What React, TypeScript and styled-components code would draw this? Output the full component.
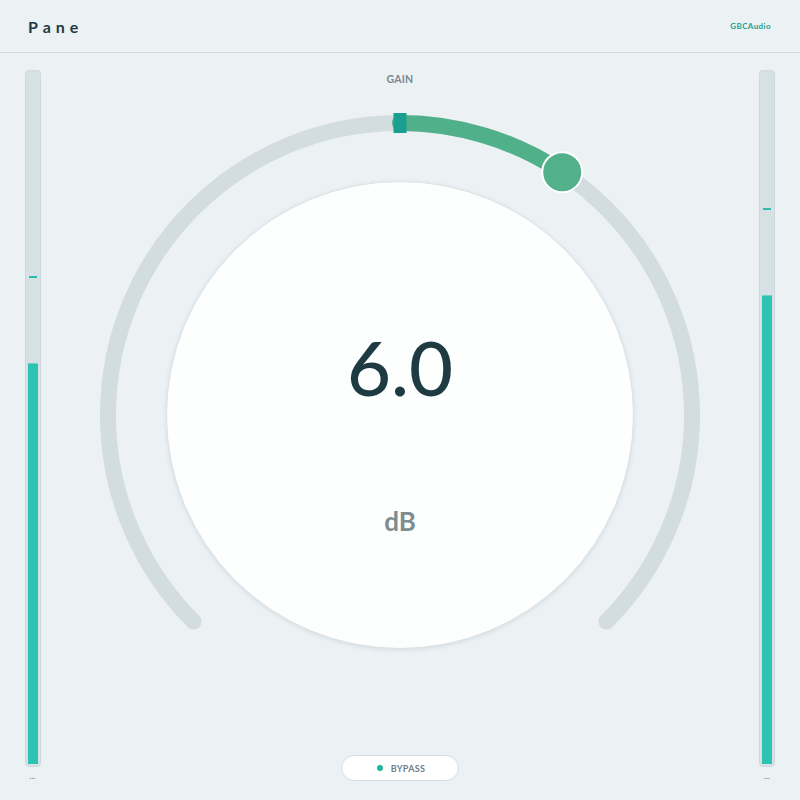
import styled, { createGlobalStyle } from 'styled-components';

const GlobalStyle = createGlobalStyle`
  html, body {
    margin: 0;
    padding: 0;
    background: #ecf1f4;
    font-family: Lato, "Open Sans", sans-serif;
  }
`;

const Page = styled.div`
  width: 800px;
  height: 800px;
  display: flex;
  flex-direction: column;
  background: #ecf1f4;
  overflow: hidden;
`;

const Header = styled.header`
  height: 52px;
  display: flex;
  align-items: center;
  justify-content: space-between;
  padding: 0 29px 0 28px;
  border-bottom: 1px solid #cfdbdd;
`;

const Title = styled.h1`
  margin: 0;
  font-size: 16px;
  font-weight: 700;
  letter-spacing: 5px;
  color: #1f3b42;
`;

const Brand = styled.span`
  font-size: 8px;
  font-weight: 700;
  letter-spacing: 0.4px;
  color: #1aa08f;
`;

const Body = styled.main`
  flex: 1;
  display: grid;
  grid-template-columns: 64px 1fr 64px;
  padding-top: 17px;
`;

const MeterColumn = styled.div<{ $right?: boolean }>`
  display: flex;
  flex-direction: column;
  align-items: center;
  padding: ${(p) => (p.$right ? '0 2px 0 0' : '0 0 0 1px')};
`;

const Track = styled.div`
  width: 10px;
  height: 691px;
  padding: 2px;
  border-radius: 4px;
  background: #d7e0e3;
  border: 1px solid #cdd9dc;
  display: flex;
  flex-direction: column;
  justify-content: flex-end;
  position: relative;
`;

const Fill = styled.div`
  background: #2cc3b3;
  border-top: 1px solid #6fd2c7;
`;

const Peak = styled.div`
  position: absolute;
  left: 3px;
  right: 3px;
  height: 2px;
  background: #2bbcad;
`;

const Dots = styled.span`
  margin-top: 4px;
  font-size: 8px;
  line-height: 10px;
  font-weight: 700;
  color: #7d8a8f;
  letter-spacing: 0.3px;
`;

const Center = styled.section`
  display: flex;
  flex-direction: column;
  align-items: center;
`;

const Label = styled.div`
  margin-top: 3px;
  font-size: 10.5px;
  line-height: 12px;
  font-weight: 700;
  color: #7a888d;
  letter-spacing: 0.2px;
`;

const Dial = styled.div`
  margin-top: 10px;
  width: 640px;
  height: 640px;
  display: grid;
  place-items: center;
  & > * {
    grid-area: 1 / 1;
  }
`;

const Face = styled.div`
  width: 466px;
  height: 466px;
  border-radius: 50%;
  background: #fdfefe;
  border: 1px solid #dbe3e6;
  box-shadow: 0 1px 4px rgba(40, 70, 80, 0.12);
  display: flex;
  flex-direction: column;
  align-items: center;
`;

const Value = styled.div`
  margin-top: 140px;
  font-size: 76px;
  line-height: 90px;
  font-weight: 500;
  color: #1f3b42;
`;

const Unit = styled.div`
  margin-top: 94px;
  font-size: 26px;
  line-height: 30px;
  font-weight: 700;
  color: #7f8d91;
`;

const Bypass = styled.button`
  margin-top: 20px;
  width: 118px;
  height: 26px;
  border-radius: 13px;
  background: #ffffff;
  border: 1px solid #d3dddf;
  display: flex;
  align-items: center;
  justify-content: center;
  gap: 8px;
  padding: 0 0 0 2px;
  font-family: Lato, sans-serif;
  font-size: 9px;
  font-weight: 700;
  color: #6f7e83;
  letter-spacing: 0.3px;
`;

const Dot = styled.span`
  width: 6px;
  height: 6px;
  border-radius: 50%;
  background: #1fb5a4;
`;

const C = 320;
const R = 292;

const pt = (deg: number) => {
  const a = (deg * Math.PI) / 180;
  return [C + R * Math.sin(a), C - R * Math.cos(a)];
};

const arc = (from: number, to: number) => {
  const [x1, y1] = pt(from);
  const [x2, y2] = pt(to);
  const large = to - from > 180 ? 1 : 0;
  return `M ${x1} ${y1} A ${R} ${R} 0 ${large} 1 ${x2} ${y2}`;
};

const Meter = ({ level, peak, right }: { level: number; peak: number; right?: boolean }) => (
  <MeterColumn $right={right}>
    <Track>
      <Peak style={{ top: `${(1 - peak) * 100}%` }} />
      <Fill style={{ height: `${level * 100}%` }} />
    </Track>
    <Dots>...</Dots>
  </MeterColumn>
);

export default function App() {
  const gain = 6;
  const angle = (gain / 24) * 135;
  const [hx, hy] = pt(angle);

  return (
    <Page>
      <GlobalStyle />
      <Header>
        <Title>Pane</Title>
        <Brand>GBCAudio</Brand>
      </Header>
      <Body>
        <Meter level={0.579} peak={0.705} />
        <Center>
          <Label>GAIN</Label>
          <Dial>
            <svg width="640" height="640" viewBox="0 0 640 640">
              <path d={arc(-135, 135)} fill="none" stroke="#d3dcdf" strokeWidth="16" strokeLinecap="round" />
              <path d={arc(0, angle)} fill="none" stroke="#50b08a" strokeWidth="16" strokeLinecap="round" />
              <rect x="313.5" y="18" width="13" height="20" fill="#199e8f" />
              <circle cx={hx} cy={hy} r="20" fill="#52b08a" stroke="#ffffff" strokeWidth="2" />
            </svg>
            <Face>
              <Value>{gain.toFixed(1)}</Value>
              <Unit>dB</Unit>
            </Face>
          </Dial>
          <Bypass>
            <Dot />
            BYPASS
          </Bypass>
        </Center>
        <Meter level={0.678} peak={0.803} right />
      </Body>
    </Page>
  );
}
